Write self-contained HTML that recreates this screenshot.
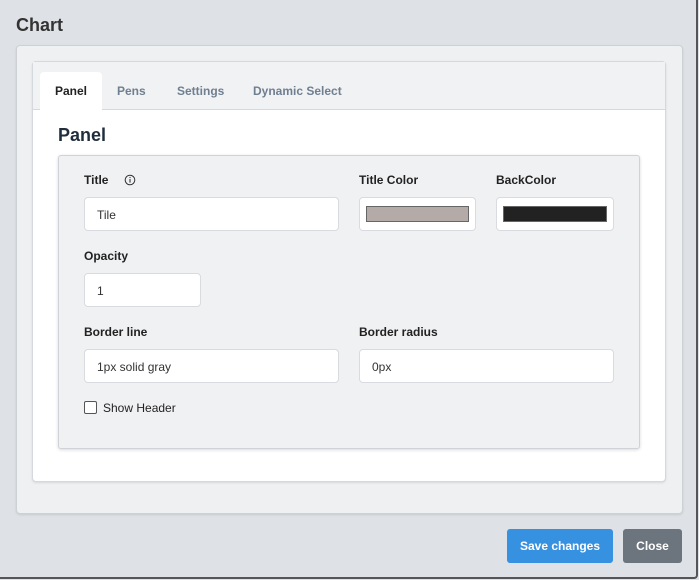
<!DOCTYPE html>
<html><head><style>
*{box-sizing:border-box}
body{margin:0;width:699px;height:580px;background:#dee1e5;font-family:"Liberation Sans",Arial,sans-serif;position:relative;overflow:hidden}
.frame{position:absolute;left:0;top:0;width:698px;height:579px;border-right:2px solid #555;border-bottom:2px solid #555;border-radius:0 0 4px 0}
.abs{position:absolute}
.h{left:16px;top:15px;font-size:18px;font-weight:bold;color:#333}
.outer{left:16px;top:45px;width:667px;height:469px;background:#eff0f2;border:1px solid #cdd0d4;border-radius:4px;box-shadow:0 1px 2px rgba(0,0,0,.1)}
.inner{left:32px;top:61px;width:634px;height:421px;background:#fff;border:1px solid #d5d8dc;border-radius:4px;box-shadow:0 1px 2px rgba(0,0,0,.1)}
.tabbar{left:33px;top:62px;width:632px;height:48px;background:#f1f2f4;border-bottom:1px solid #d5d8dc}
.tab{top:84px;font-size:12px;font-weight:bold;color:#6f7f90}
.active{left:40px;top:72px;width:62px;height:39px;background:#fff;border-radius:4px 4px 0 0}
.ph{left:58px;top:125px;font-size:18px;font-weight:bold;color:#1f2d3d}
.box{left:58px;top:155px;width:582px;height:294px;background:#f0f1f3;border:1px solid #cfd2d6;border-radius:3px;box-shadow:0 1px 3px rgba(0,0,0,.15)}
.lbl{font-size:12px;font-weight:bold;color:#222}
.in{background:#fff;border:1px solid #d8dbdf;border-radius:4px;height:34px;font-size:12px;color:#333;padding:10px 12px}
.sw{position:absolute;left:6px;top:8px;right:6px;bottom:8px;border:1px solid #666}
.btn{top:529px;height:34px;border-radius:3px;color:#fff;font-size:12px;font-weight:bold;text-align:center;line-height:34px}
</style></head><body>
<div class="frame"></div>
<div class="abs h">Chart</div>
<div class="abs outer"></div>
<div class="abs inner"></div>
<div class="abs tabbar"></div>
<div class="abs active"></div>
<div class="abs tab" style="left:55px;color:#222">Panel</div>
<div class="abs tab" style="left:117px">Pens</div>
<div class="abs tab" style="left:177px">Settings</div>
<div class="abs tab" style="left:253px">Dynamic Select</div>
<div class="abs ph">Panel</div>
<div class="abs box"></div>
<div class="abs lbl" style="left:84px;top:173px">Title</div>
<svg class="abs" style="left:124px;top:174px" width="12" height="12" viewBox="0 0 12 12"><circle cx="6" cy="6" r="4.8" fill="none" stroke="#333" stroke-width="1"/><line x1="6" y1="5" x2="6" y2="8.6" stroke="#333" stroke-width="1.1"/><circle cx="6" cy="3.5" r=".6" fill="#333"/></svg>
<div class="abs lbl" style="left:359px;top:173px">Title Color</div>
<div class="abs lbl" style="left:496px;top:173px">BackColor</div>
<div class="abs in" style="left:84px;top:197px;width:255px">Tile</div>
<div class="abs in" style="left:359px;top:197px;width:117px"><div class="sw" style="background:#b4aaa8"></div></div>
<div class="abs in" style="left:496px;top:197px;width:118px"><div class="sw" style="background:#222"></div></div>
<div class="abs lbl" style="left:84px;top:249px">Opacity</div>
<div class="abs in" style="left:84px;top:273px;width:117px">1</div>
<div class="abs lbl" style="left:84px;top:325px">Border line</div>
<div class="abs lbl" style="left:359px;top:325px">Border radius</div>
<div class="abs in" style="left:84px;top:349px;width:255px">1px solid gray</div>
<div class="abs in" style="left:359px;top:349px;width:255px">0px</div>
<div class="abs" style="left:84px;top:401px;width:13px;height:13px;border:1px solid #555;border-radius:2px;background:#fff"></div>
<div class="abs" style="left:103px;top:401px;font-size:12px;color:#222">Show Header</div>
<div class="abs btn" style="left:507px;width:106px;background:#3791e1">Save changes</div>
<div class="abs btn" style="left:623px;width:59px;background:#6c757d">Close</div>
</body></html>
